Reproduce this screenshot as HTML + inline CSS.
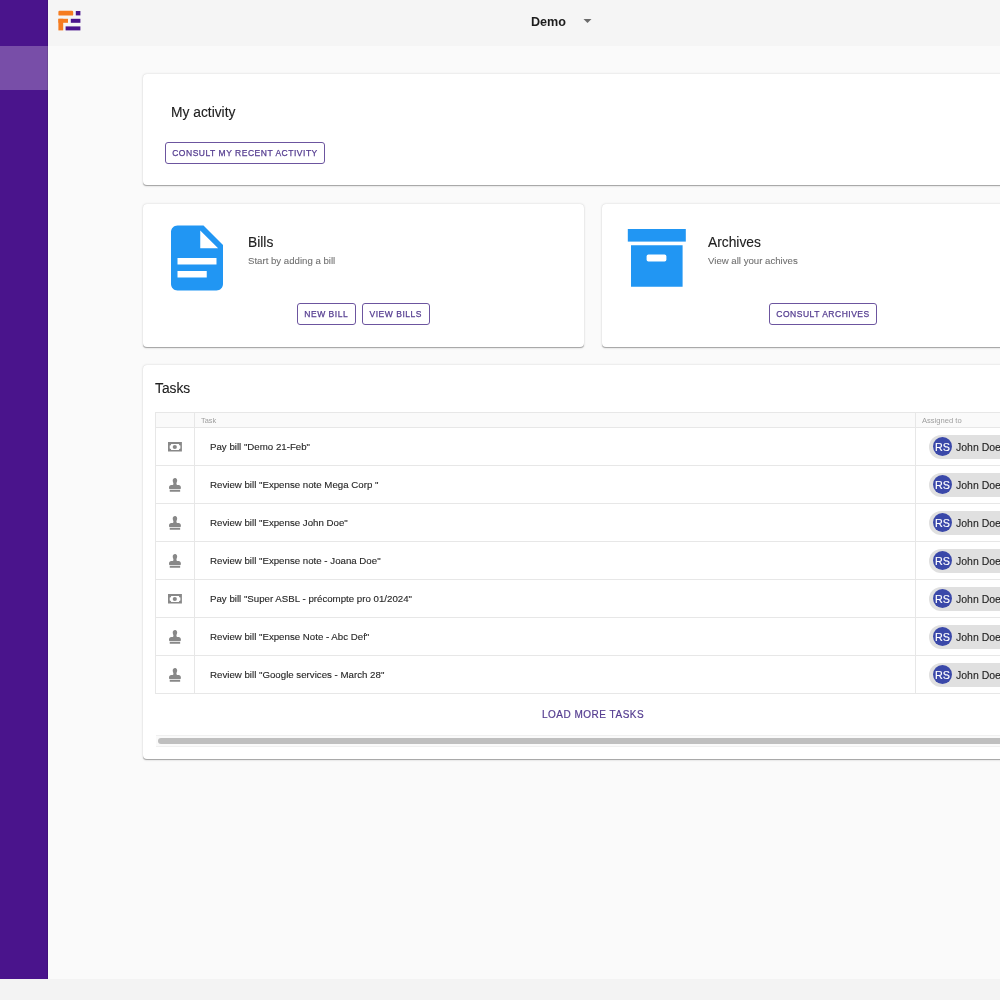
<!DOCTYPE html>
<html>
<head>
<meta charset="utf-8">
<style>
html,body{margin:0;padding:0;}
.t,.btn,.cn,.av{will-change:transform;}
body{width:1000px;height:1000px;overflow:hidden;position:relative;background:#fafafa;font-family:"Liberation Sans",sans-serif;color:rgba(0,0,0,0.87);}
.abs{position:absolute;}
.t{position:absolute;white-space:nowrap;line-height:1;}
#side{left:0;top:0;width:48px;height:979px;background:#4a148c;}
#sideedge{left:46.5px;top:0;width:1.5px;height:979px;background:rgba(0,0,0,0.1);}
#sel{left:0;top:45.6px;width:48px;height:44.2px;background:#784ea8;}
#bottom{left:0;top:979px;width:1000px;height:21px;background:#f3f3f3;}
#header{left:48px;top:0;width:952px;height:46px;background:#f5f5f5;}
.card{position:absolute;background:#fff;border-radius:4px;box-shadow:0 1.4px 0.9px -0.7px rgba(0,0,0,0.18),0 0.7px 0.9px 0 rgba(0,0,0,0.13),0 0.7px 2.6px 0 rgba(0,0,0,0.12);}
.btn{position:absolute;box-sizing:border-box;border:1px solid #6c559f;border-radius:3px;height:22px;color:#553d90;-webkit-text-stroke:0.25px #553d90;font-size:8.5px;letter-spacing:0.52px;line-height:21px;text-align:center;white-space:nowrap;}
.h6{font-size:13.8px;color:#212121;-webkit-text-stroke:0.12px #212121;}
.sub{font-size:9.65px;color:#6f6f6f;-webkit-text-stroke:0.08px #6f6f6f;}
.row{font-size:9.7px;color:#262626;-webkit-text-stroke:0.12px #262626;}
.hline{position:absolute;height:1px;background:#e7e7e7;}
.vline{position:absolute;width:1px;background:#e7e7e7;}
.chip{position:absolute;left:928.6px;width:100px;height:24px;border-radius:12px;background:#e0e0e0;}
.av{position:absolute;left:4.2px;top:2.4px;width:19px;height:19px;border-radius:50%;background:#3a48a9;color:#fff;font-size:10.8px;line-height:20.2px;text-align:center;-webkit-text-stroke:0.15px #fff;}
.cn{position:absolute;left:27.3px;top:0;line-height:24px;font-size:10.5px;color:#212121;white-space:nowrap;-webkit-text-stroke:0.1px #212121;}
</style>
</head>
<body>
<div id="side" class="abs"></div>
<div id="sel" class="abs"></div>
<div id="sideedge" class="abs"></div>
<div id="header" class="abs"></div>
<div id="bottom" class="abs"></div>

<!-- logo -->
<svg class="abs" style="left:0;top:0" width="100" height="40" viewBox="0 0 100 40">
  <rect x="58.4" y="10.8" width="14.8" height="4.8" rx="1.2" fill="#f57c20"/>
  <rect x="75.8" y="11" width="4.6" height="4.4" fill="#4a148c"/>
  <rect x="58.4" y="18.8" width="9.6" height="4" fill="#f57c20"/>
  <rect x="58.4" y="18.8" width="4.8" height="11.6" fill="#f57c20"/>
  <rect x="70.8" y="18.8" width="9.6" height="4" fill="#4a148c"/>
  <rect x="65.6" y="26.4" width="14.8" height="4" fill="#4a148c"/>
</svg>

<div class="t" style="left:530.5px;top:15.8px;font-size:12.6px;font-weight:bold;color:#1c1c1c;">Demo</div>
<svg class="abs" style="left:582.6px;top:18.4px" width="9" height="6" viewBox="0 0 9 6"><path d="M0.5 0.9H8.5L4.5 5z" fill="#6b6b6b"/></svg>

<!-- activity card -->
<div class="card" style="left:143px;top:74px;width:900px;height:111px;"></div>
<div class="t h6" style="left:171px;top:106.1px;">My activity</div>
<div class="btn" style="left:165px;top:142px;width:160px;">CONSULT MY RECENT ACTIVITY</div>

<!-- bills card -->
<div class="card" style="left:143px;top:204px;width:441px;height:143px;"></div>
<svg class="abs" style="left:158px;top:219px" width="78" height="78" viewBox="0 0 24 24">
  <path fill="#2196f3" fill-rule="evenodd" d="M14 2H6c-1.1 0-2 .9-2 2v16c0 1.1.9 2 2 2h12c1.1 0 2-.9 2-2V8l-6-6zM13 3.5V9h5.5zM6 12h12v2H6zM6 16h9v2H6z"/>
</svg>
<div class="t h6" style="left:248.4px;top:236.4px;">Bills</div>
<div class="t sub" style="left:248.4px;top:255.5px;">Start by adding a bill</div>
<div class="btn" style="left:297.3px;top:303px;width:58.5px;">NEW BILL</div>
<div class="btn" style="left:362px;top:303px;width:67.5px;">VIEW BILLS</div>

<!-- archives card -->
<div class="card" style="left:602px;top:204px;width:441px;height:143px;"></div>
<svg class="abs" style="left:620px;top:220px" width="80" height="80" viewBox="0 0 80 80">
  <rect x="7.8" y="9" width="58" height="12.6" fill="#2196f3"/>
  <path fill="#2196f3" fill-rule="evenodd" d="M11 25.2H62.6V66.8H11zM28.4 34.4h16.2a1.8 1.8 0 0 1 1.8 1.8v3.6a1.8 1.8 0 0 1 -1.8 1.8h-16.2a1.8 1.8 0 0 1 -1.8 -1.8v-3.6a1.8 1.8 0 0 1 1.8 -1.8z"/>
</svg>
<div class="t h6" style="left:707.9px;top:236.4px;">Archives</div>
<div class="t sub" style="left:707.9px;top:255.5px;">View all your achives</div>
<div class="btn" style="left:769px;top:303px;width:108px;">CONSULT ARCHIVES</div>

<!-- tasks card -->
<div class="card" style="left:143px;top:365px;width:900px;height:394px;"></div>
<div class="t h6" style="left:154.8px;top:382.4px;">Tasks</div>

<!--TABLE-->
<div class="abs" style="left:156px;top:413px;width:844px;height:14px;background:#fafafa;"></div>
<div class="hline" style="left:155px;top:412px;width:845px;"></div>
<div class="hline" style="left:155px;top:427px;width:845px;"></div>
<div class="vline" style="left:155px;top:412px;height:282px;"></div>
<div class="vline" style="left:194px;top:412px;height:282px;"></div>
<div class="vline" style="left:915px;top:412px;height:282px;"></div>
<div class="t" style="left:201.3px;top:416.7px;font-size:7.4px;color:#9e9e9e;">Task</div>
<div class="t" style="left:922px;top:417px;font-size:7.6px;color:#9e9e9e;">Assigned to</div>
<div class="hline" style="left:155px;top:465px;width:845px;"></div>
<svg class="abs" style="left:168.3px;top:442.0px" width="14" height="10" viewBox="0 0 14 10"><path fill="#888" fill-rule="evenodd" d="M0 0H13.9V9.6H0zM1.7 3.4A1.5 1.5 0 0 0 3.2 1.9H10.9A1.5 1.5 0 0 0 12.4 3.4V6.6A1.5 1.5 0 0 0 10.9 8.1H3.2A1.5 1.5 0 0 0 1.7 6.6z"/><circle cx="6.8" cy="5.0" r="2.1" fill="#888"/></svg>
<div class="t row" style="left:210.3px;top:441.6px;">Pay bill &quot;Demo 21-Feb&quot;</div>
<div class="chip" style="top:434.8px;"><div class="av">RS</div><div class="cn">John Doe</div></div>
<div class="hline" style="left:155px;top:503px;width:845px;"></div>
<svg class="abs" style="left:169.1px;top:478.0px" width="11.9" height="13.8" viewBox="0 0 512 512" preserveAspectRatio="none"><path fill="#888" d="M32 512h448v-64H32v64zm384-256h-66.56c-16.26 0-29.440-13.18-29.44-29.44v-9.46c0-27.37 8.88-53.41 21.46-77.72 9.11-17.61 12.9-38.39 9.05-60.42-6.77-38.78-38.47-70.7-77.26-77.45C212.62-9.04 160 37.33 160 96c0 14.16 3.12 27.54 8.69 39.58C182.02 164.43 192 194.7 192 226.49v.07c0 16.26-13.18 29.44-29.44 29.44H96c-53.02 0-96 42.98-96 96v32c0 17.67 14.33 32 32 32h448c17.67 0 32-14.33 32-32v-32c0-53.02-42.98-96-96-96z"/></svg>
<div class="t row" style="left:210.3px;top:479.6px;">Review bill &quot;Expense note Mega Corp &quot;</div>
<div class="chip" style="top:472.8px;"><div class="av">RS</div><div class="cn">John Doe</div></div>
<div class="hline" style="left:155px;top:541px;width:845px;"></div>
<svg class="abs" style="left:169.1px;top:516.0px" width="11.9" height="13.8" viewBox="0 0 512 512" preserveAspectRatio="none"><path fill="#888" d="M32 512h448v-64H32v64zm384-256h-66.56c-16.26 0-29.440-13.18-29.44-29.44v-9.46c0-27.37 8.88-53.41 21.46-77.72 9.11-17.61 12.9-38.39 9.05-60.42-6.77-38.78-38.47-70.7-77.26-77.45C212.62-9.04 160 37.33 160 96c0 14.16 3.12 27.54 8.69 39.58C182.02 164.43 192 194.7 192 226.49v.07c0 16.26-13.18 29.44-29.44 29.44H96c-53.02 0-96 42.98-96 96v32c0 17.67 14.33 32 32 32h448c17.67 0 32-14.33 32-32v-32c0-53.02-42.98-96-96-96z"/></svg>
<div class="t row" style="left:210.3px;top:517.6px;">Review bill &quot;Expense John Doe&quot;</div>
<div class="chip" style="top:510.8px;"><div class="av">RS</div><div class="cn">John Doe</div></div>
<div class="hline" style="left:155px;top:579px;width:845px;"></div>
<svg class="abs" style="left:169.1px;top:554.0px" width="11.9" height="13.8" viewBox="0 0 512 512" preserveAspectRatio="none"><path fill="#888" d="M32 512h448v-64H32v64zm384-256h-66.56c-16.26 0-29.440-13.18-29.44-29.44v-9.46c0-27.37 8.88-53.41 21.46-77.72 9.11-17.61 12.9-38.39 9.05-60.42-6.77-38.78-38.47-70.7-77.26-77.45C212.62-9.04 160 37.33 160 96c0 14.16 3.12 27.54 8.69 39.58C182.02 164.43 192 194.7 192 226.49v.07c0 16.26-13.18 29.44-29.44 29.44H96c-53.02 0-96 42.98-96 96v32c0 17.67 14.33 32 32 32h448c17.67 0 32-14.33 32-32v-32c0-53.02-42.98-96-96-96z"/></svg>
<div class="t row" style="left:210.3px;top:555.6px;">Review bill &quot;Expense note - Joana Doe&quot;</div>
<div class="chip" style="top:548.8px;"><div class="av">RS</div><div class="cn">John Doe</div></div>
<div class="hline" style="left:155px;top:617px;width:845px;"></div>
<svg class="abs" style="left:168.3px;top:594.0px" width="14" height="10" viewBox="0 0 14 10"><path fill="#888" fill-rule="evenodd" d="M0 0H13.9V9.6H0zM1.7 3.4A1.5 1.5 0 0 0 3.2 1.9H10.9A1.5 1.5 0 0 0 12.4 3.4V6.6A1.5 1.5 0 0 0 10.9 8.1H3.2A1.5 1.5 0 0 0 1.7 6.6z"/><circle cx="6.8" cy="5.0" r="2.1" fill="#888"/></svg>
<div class="t row" style="left:210.3px;top:593.6px;">Pay bill &quot;Super ASBL - précompte pro 01/2024&quot;</div>
<div class="chip" style="top:586.8px;"><div class="av">RS</div><div class="cn">John Doe</div></div>
<div class="hline" style="left:155px;top:655px;width:845px;"></div>
<svg class="abs" style="left:169.1px;top:630.0px" width="11.9" height="13.8" viewBox="0 0 512 512" preserveAspectRatio="none"><path fill="#888" d="M32 512h448v-64H32v64zm384-256h-66.56c-16.26 0-29.440-13.18-29.44-29.44v-9.46c0-27.37 8.88-53.41 21.46-77.72 9.11-17.61 12.9-38.39 9.05-60.42-6.77-38.78-38.47-70.7-77.26-77.45C212.62-9.04 160 37.33 160 96c0 14.16 3.12 27.54 8.69 39.58C182.02 164.43 192 194.7 192 226.49v.07c0 16.26-13.18 29.44-29.44 29.44H96c-53.02 0-96 42.98-96 96v32c0 17.67 14.33 32 32 32h448c17.67 0 32-14.33 32-32v-32c0-53.02-42.98-96-96-96z"/></svg>
<div class="t row" style="left:210.3px;top:631.6px;">Review bill &quot;Expense Note - Abc Def&quot;</div>
<div class="chip" style="top:624.8px;"><div class="av">RS</div><div class="cn">John Doe</div></div>
<div class="hline" style="left:155px;top:693px;width:845px;"></div>
<svg class="abs" style="left:169.1px;top:668.0px" width="11.9" height="13.8" viewBox="0 0 512 512" preserveAspectRatio="none"><path fill="#888" d="M32 512h448v-64H32v64zm384-256h-66.56c-16.26 0-29.440-13.18-29.44-29.44v-9.46c0-27.37 8.88-53.41 21.46-77.72 9.11-17.61 12.9-38.39 9.05-60.42-6.77-38.78-38.47-70.7-77.26-77.45C212.62-9.04 160 37.33 160 96c0 14.16 3.12 27.54 8.69 39.58C182.02 164.43 192 194.7 192 226.49v.07c0 16.26-13.18 29.44-29.44 29.44H96c-53.02 0-96 42.98-96 96v32c0 17.67 14.33 32 32 32h448c17.67 0 32-14.33 32-32v-32c0-53.02-42.98-96-96-96z"/></svg>
<div class="t row" style="left:210.3px;top:669.6px;">Review bill &quot;Google services - March 28&quot;</div>
<div class="chip" style="top:662.8px;"><div class="av">RS</div><div class="cn">John Doe</div></div>
<div class="t" style="left:542px;top:709.9px;font-size:10px;letter-spacing:0.5px;color:#553d90;-webkit-text-stroke:0.2px #553d90;">LOAD MORE TASKS</div>
<div class="abs" style="left:156px;top:734.6px;width:844px;height:12px;background:#fafafa;border-top:1px solid #f0f0f0;border-bottom:1px solid #f0f0f0;box-sizing:border-box;"></div>
<div class="abs" style="left:158px;top:737.8px;width:900px;height:6px;border-radius:3px;background:#bfbfbf;"></div>
<!--/TABLE-->
</body>
</html>
